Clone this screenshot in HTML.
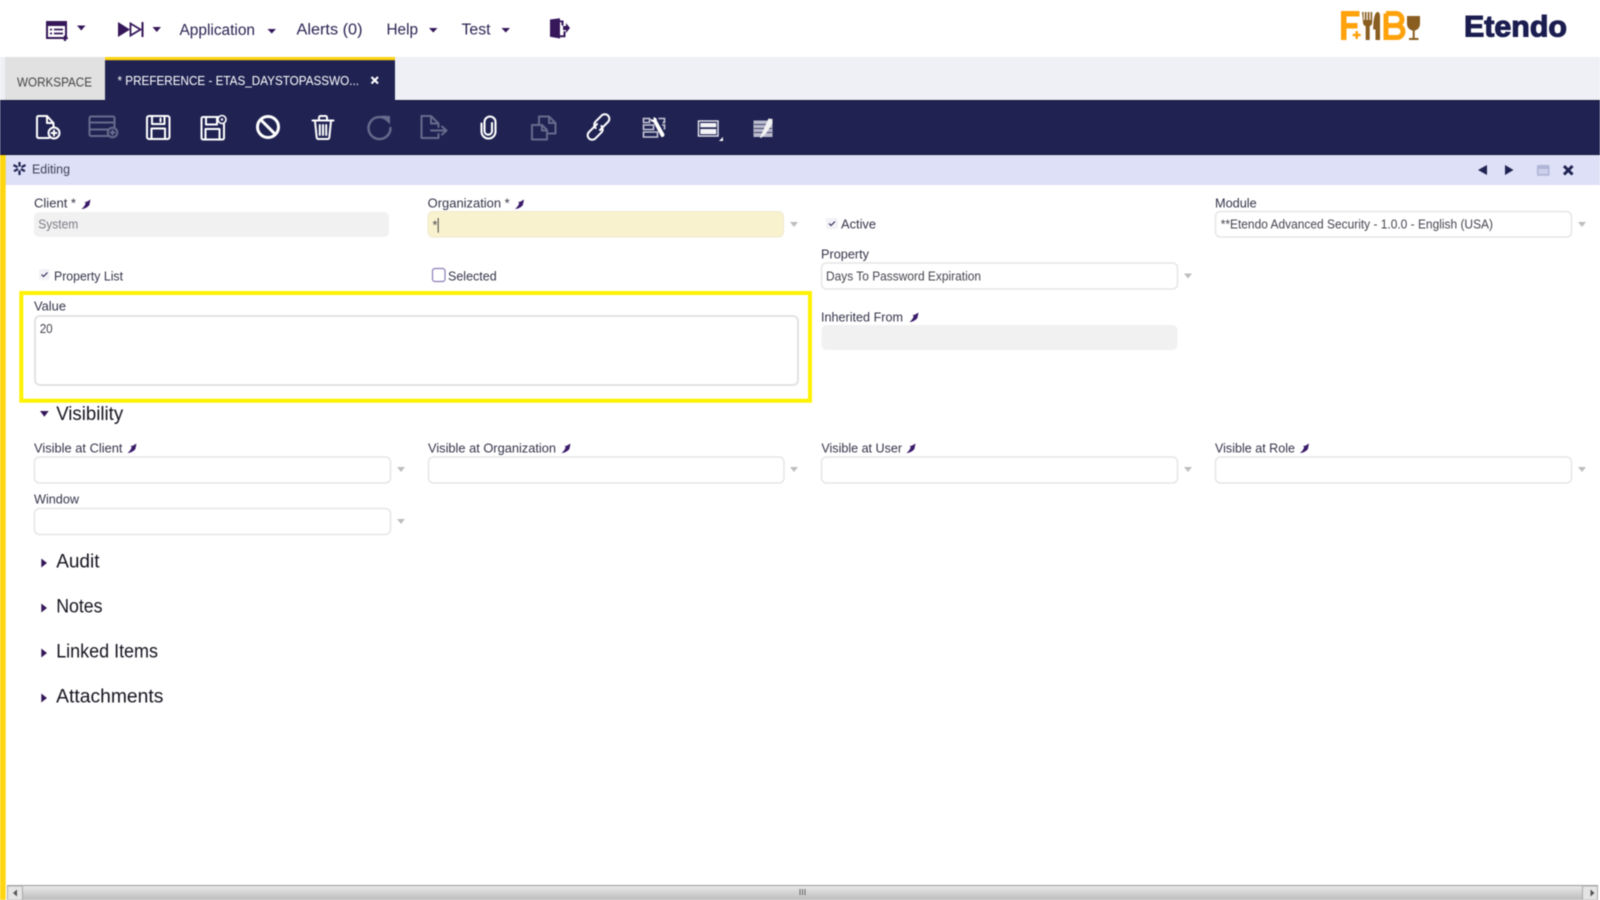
<!DOCTYPE html>
<html lang="en"><head><meta charset="utf-8"><title>Etendo - Preference</title>
<style>
html,body{margin:0;padding:0;width:1600px;height:900px;overflow:hidden;background:#fff}
svg{display:block;filter:blur(.42px)}
text{font-family:"Liberation Sans",sans-serif}
.m{font-size:15.5px;fill:#2a2352}
.l{font-size:12.5px;fill:#34344a}
.v{font-size:12.5px;fill:#45454f}
.h{font-size:19px;fill:#14141f}
.w{fill:none;stroke:#fff;stroke-width:2;stroke-linecap:round;stroke-linejoin:round}
.d{fill:none;stroke:#666a8c;stroke-width:2;stroke-linecap:round;stroke-linejoin:round}
.i{fill:#fff;stroke:#e6e6e6;stroke-width:1.5}
.g{fill:#f1f1f1}
.a{fill:#bdbdbd}
.c{fill:#35175a}
</style></head><body>
<svg width="1600" height="900" viewBox="0 0 1600 900" xmlns="http://www.w3.org/2000/svg">
<defs>
<path id="pin" d="M9 0L8 5C7.200 7.300 3.500 9.300 0 9.600C2.200 7.800 3.500 5.800 4.200 3.800L3 2.600L5.200 2.200Z" fill="#3a1a6a"/>
<linearGradient id="sb" x1="0" y1="0" x2="0" y2="1"><stop offset="0" stop-color="#ececec"/><stop offset="1" stop-color="#bcbcbc"/></linearGradient>
</defs>
<rect width="1600" height="900" fill="#fff"/>

<!-- top menu -->
<g>
<rect x="47" y="22" width="19" height="16" fill="none" stroke="#35175a" stroke-width="2"/>
<rect x="47" y="22" width="19" height="4" fill="#35175a"/>
<path d="M50 29.500h2M54 29.500h9M50 33.500h2M54 33.500h9" stroke="#35175a" stroke-width="1.800"/>
<path d="M65 35.500v5.500M62.300 38.200h5.500" stroke="#35175a" stroke-width="2.200"/>
<path class="c" d="M77 25.500h8.500l-4.250 5zM152.500 27h8.500l-4.250 5zM267.500 29h8.500l-4.250 4.500zM429 28h8.500l-4.250 4.500zM501.500 28h8.500l-4.250 4.500z"/>
<path class="c" d="M118 22l12 7.500-12 7.500z"/>
<path d="M130.500 23.500l10 6-10 6z" fill="none" stroke="#35175a" stroke-width="1.800"/>
<rect x="141.500" y="22" width="2" height="15" fill="#35175a"/>
<path class="c" d="M550 19.500l10-1.200v2.200h3.500v5h-2v-3.200h-1.500v13h3.500v-4h2v6h-5.500v1.200l-10-1.700z"/>
<path class="c" d="M563 26h3v-3l4 5-4 5v-3h-3z"/>
<text class="m" x="179.500" y="35" textLength="75.500" lengthAdjust="spacingAndGlyphs">Application</text>
<text class="m" x="296.500" y="34.500" textLength="66" lengthAdjust="spacingAndGlyphs">Alerts (0)</text>
<text class="m" x="386.500" y="34.500" textLength="31.500" lengthAdjust="spacingAndGlyphs">Help</text>
<text class="m" x="461.500" y="34.500" textLength="29" lengthAdjust="spacingAndGlyphs">Test</text>
</g>

<!-- logo -->
<g>
<path d="M1341 11h18.500v5.500h-13v6.500h11v5.500h-11v11.500h-5.500z" fill="#ffa20c"/>
<path d="M1356.700 31v8M1352.700 35h8" stroke="#ffa20c" stroke-width="2.400"/>
<path d="M1362 12h1.600v8h1.200v-8h1.700v8h1.200v-8h1.700v8h1.200v-8h1.600v10c0 2.500-1 3.500-2.500 4.200V40h-4V26.200c-1.700-.7-2.700-1.700-2.700-4.200z" fill="#8a5d20"/>
<path d="M1377.500 12c2 0 2.500 2 2.500 5v23h-4.500V29.500h-2.200C1373 22 1374.500 12 1377.500 12z" fill="#8a5d20"/>
<path d="M1386 13.500V37.500H1397a6 6 0 0 0 0-12H1386M1386 25.500H1396a6 6 0 0 0 0-12H1386" fill="none" stroke="#ffa20c" stroke-width="5"/>
<path d="M1407 16h13v7.500c0 4-2.500 6.500-5.300 7V38h3.800v2h-9.500v-2h3.700v-7.500c-3-.5-5.700-3-5.700-7z" fill="#8a5d20"/>
<text x="1464" y="36.500" font-size="30" font-weight="700" fill="#1b1d50" stroke="#1b1d50" stroke-width="1.100" textLength="103" lengthAdjust="spacingAndGlyphs">Etendo</text>
</g>

<!-- tab bar -->
<rect x="0" y="57" width="1600" height="43" fill="#eff0f5"/>
<rect x="5" y="57" width="100" height="43" fill="#e1e1e1"/>
<text x="17" y="86.500" font-size="12.800" fill="#444" textLength="75" lengthAdjust="spacingAndGlyphs">WORKSPACE</text>
<rect x="105" y="57" width="290" height="44" fill="#202352"/>
<rect x="105" y="57" width="290" height="3.200" fill="#ffd30e"/>
<text x="117.500" y="84.800" font-size="12.800" fill="#fff" textLength="241.500" lengthAdjust="spacingAndGlyphs">* PREFERENCE - ETAS_DAYSTOPASSWO...</text>
<path d="M371.500 77l6.500 6.500M378 77l-6.500 6.500" stroke="#fff" stroke-width="2.100"/>

<!-- toolbar -->
<rect x="0" y="100" width="1600" height="55" fill="#202352"/>
<rect x="0" y="100" width="105" height="1" fill="#11123a"/><rect x="395" y="100" width="1205" height="1" fill="#11123a"/>
<rect x="0" y="154" width="1600" height="1" fill="#11123a"/>

<!-- 1 new doc -->
<path class="w" d="M47 116H38.500a1.500 1.500 0 0 0-1.500 1.500v19a1.500 1.500 0 0 0 1.500 1.500H49M47 116l6.500 7v4M47 116v7h6.500"/>
<circle class="w" cx="54" cy="133" r="5.500"/><path class="w" d="M51.500 133h5M54 130.500v5"/>
<!-- 2 new row -->
<path class="d" d="M108 136H91a1.500 1.500 0 0 1-1.500-1.500V118a1.500 1.500 0 0 1 1.500-1.500h22a1.500 1.500 0 0 1 1.500 1.500v9M89.500 122.500h25M89.500 129.500h19"/>
<circle class="d" cx="112.500" cy="132.500" r="4.800"/><path class="d" d="M110.500 132.500h4M112.500 130.500v4"/>
<!-- 3 save -->
<rect class="w" x="147" y="116" width="22.500" height="23" rx="2"/>
<path class="w" d="M152 116v8h12.500v-8M160.500 118.500v3M151.500 139v-10.500h13.500V139"/>
<!-- 4 save as -->
<path class="w" d="M218 117H203a1.500 1.500 0 0 0-1.500 1.500v19.500a1.500 1.500 0 0 0 1.500 1.500h19.500a1.500 1.500 0 0 0 1.500-1.500V124"/>
<path class="w" d="M206 117v7.500h11V117M205.500 139.500V129h14v10.500"/>
<circle cx="222" cy="119.500" r="4" fill="none" stroke="#fff" stroke-width="1.600"/><circle cx="222" cy="119.500" r="1.200" fill="#fff"/>
<!-- 5 stop -->
<circle cx="268" cy="127" r="10.500" fill="none" stroke="#fff" stroke-width="3"/>
<path d="M260.500 119.500l15 15" stroke="#fff" stroke-width="3"/>
<!-- 6 trash -->
<path class="w" d="M312.500 120.500h21M319 120v-2.500a1.500 1.500 0 0 1 1.500-1.500h5a1.500 1.500 0 0 1 1.500 1.500v2.500M315 121l1.700 16.500a1.800 1.800 0 0 0 1.800 1.500h9a1.800 1.800 0 0 0 1.800-1.500L331 121M319.800 125v10M323 125v10M326.200 125v10"/>
<!-- 7 refresh -->
<path d="M387.500 120.500a11 11 0 1 0 3 7.500" fill="none" stroke="#666a8c" stroke-width="2.400" stroke-linecap="round"/>
<path d="M381.500 115.500l8.500.5v8.500z" fill="#666a8c"/>
<!-- 8 export -->
<path class="d" d="M431 116H421.500V138H438.500V134M431 116l7.500 7.500V127M431 116v7.500h7.500M431 130.500h15M442 126.500l4.500 4-4.500 4"/>
<!-- 9 clip -->
<path d="M481.500 123.500v8a7 7 0 0 0 14 0V122a5.500 5.500 0 0 0-11 0v9.500a3.800 3.800 0 0 0 7.500 0V123" fill="none" stroke="#fff" stroke-width="2.100" stroke-linecap="round"/>
<!-- 10 copy -->
<path class="d" d="M539 124v-7.500h10l6.500 6.500v10.500H547M549 116.500v6.500h6.500M532 125h10l5 5v9.500H532zM542 125v5.500h5"/>
<!-- 11 link -->
<path class="w" stroke-width="2.200" d="M600 130l8-8a4.500 4.500 0 0 0-6.400-6.400l-6 6a4.500 4.500 0 0 0 0 6.400"/>
<path class="w" stroke-width="2.200" d="M597 124l-8 8a4.500 4.500 0 0 0 6.400 6.400l6-6a4.500 4.500 0 0 0 0-6.400"/>
<!-- 12 fields + wrench -->
<path fill="none" stroke="#c7c8d8" stroke-width="1.600" d="M643.500 118.500h6v4h-6zM658.500 118.500h6v4h-2M643.500 125h10v4.500h-10zM662 125h2.500v4.500M643.500 132h14v5h-14z"/>
<path d="M653 117.500c2.500-.5 4 1 3.800 3l7.500 13.500c.7 1.500-.8 3.500-3 3l-8-15c-1.800 0-3-1.500-2.800-3.300l2 1.200 1.500-1z" fill="#fff"/>
<!-- 13 layout -->
<rect x="698.500" y="121" width="19.500" height="15" fill="#202352" stroke="#e9e9f2" stroke-width="1.400"/>
<rect x="700.300" y="123" width="16" height="4.300" fill="#f4f4f8"/>
<rect x="700.300" y="129" width="16" height="5.200" fill="#f4f4f8"/>
<path d="M723 137v4h-4z" fill="#fff"/>
<!-- 14 note pencil -->
<rect x="753.500" y="120.500" width="19" height="16.500" fill="#b9bacd"/>
<path d="M754 124.500h18M754 128.500h18M754 132.500h18" stroke="#202352" stroke-width="1" opacity=".75"/>
<path d="M772.500 119l-4-.5-8.500 19 1 .5 5-4.500 6.500-10z" fill="#f2f2f2"/>

<!-- status bar -->
<rect x="0" y="155" width="1600" height="30" fill="#dde0f6"/>
<path d="M19.500 162v13M13.500 165l12 6.500M25.500 165l-12 6.500" stroke="#202352" stroke-width="2.200" stroke-dasharray="4.600 3.800"/>
<text x="32" y="173.300" font-size="12.500" fill="#3d3f58" textLength="38" lengthAdjust="spacingAndGlyphs">Editing</text>
<path d="M1487 165v10l-9-5zM1505 165v10l8.500-5z" fill="#1f2252"/>
<rect x="1537" y="165" width="12.500" height="10.700" rx="1" fill="#b0b4d6"/>
<rect x="1538.500" y="169" width="9.500" height="5" fill="#ccd0ea"/>
<path d="M1564 166l8.500 8.500M1572.500 166l-8.500 8.500" stroke="#1f2252" stroke-width="3"/>

<!-- left accent -->
<rect x="0" y="155" width="5.700" height="745" fill="#ffd60f"/>

<!-- Row 1 -->
<text class="l" x="34" y="207.500" textLength="42" lengthAdjust="spacingAndGlyphs">Client *</text>
<use href="#pin" x="81.500" y="199.500"/>
<rect class="g" x="34" y="212" width="355" height="25" rx="5"/>
<text x="38.300" y="228.500" font-size="12.500" fill="#7c7c84" textLength="40" lengthAdjust="spacingAndGlyphs">System</text>

<text class="l" x="427.700" y="207.300" textLength="82" lengthAdjust="spacingAndGlyphs">Organization *</text>
<use href="#pin" x="515" y="199.500"/>
<rect x="428" y="211.500" width="355.500" height="25.500" rx="5" fill="#f9f2cf" stroke="#eee9cf"/>
<text class="v" x="432.500" y="229.500">*</text>
<rect x="437.700" y="218" width="1" height="14.700" fill="#444"/>
<path class="a" d="M790 222h8l-4 5z"/>

<rect x="826" y="218" width="12" height="11" rx="2" fill="#f2f2f7"/>
<path d="M829 223.500l2 2 4-4" fill="none" stroke="#2a2352" stroke-width="1.100"/>
<text class="l" x="841" y="228.500" textLength="35" lengthAdjust="spacingAndGlyphs">Active</text>

<text class="l" x="1215" y="207.300" textLength="41.700" lengthAdjust="spacingAndGlyphs">Module</text>
<rect class="i" x="1215.500" y="211.500" width="356" height="25.500" rx="5"/>
<text class="v" x="1220.700" y="228.500" textLength="272.300" lengthAdjust="spacingAndGlyphs">**Etendo Advanced Security - 1.0.0 - English (USA)</text>
<path class="a" d="M1578 222h8l-4 5z"/>

<!-- Row 2 -->
<rect x="39" y="269" width="10.500" height="11" rx="2" fill="#f2f2f7"/>
<path d="M41.500 274.500l2 2 4-4" fill="none" stroke="#2a2352" stroke-width="1.100"/>
<text class="l" x="54" y="280.500" textLength="69" lengthAdjust="spacingAndGlyphs">Property List</text>
<rect x="432.500" y="268.500" width="12.500" height="13" rx="2.500" fill="#fff" stroke="#8b7bb8" stroke-width="1.200"/>
<text class="l" x="448" y="280.500" textLength="48.700" lengthAdjust="spacingAndGlyphs">Selected</text>

<text class="l" x="821" y="258.500" textLength="48" lengthAdjust="spacingAndGlyphs">Property</text>
<rect class="i" x="821.500" y="263" width="356" height="26" rx="5"/>
<text class="v" x="826" y="280.500" textLength="155" lengthAdjust="spacingAndGlyphs">Days To Password Expiration</text>
<path class="a" d="M1184 273.500h8l-4 5z"/>

<!-- Highlight + Value -->
<rect x="21.300" y="293" width="788.700" height="107.700" fill="none" stroke="#fff200" stroke-width="4"/>
<text class="l" x="34" y="310.500" textLength="32" lengthAdjust="spacingAndGlyphs">Value</text>
<rect x="35" y="316" width="763" height="69" rx="5" fill="#fff" stroke="#e3e3e3" stroke-width="2"/>
<text class="v" x="39.700" y="333" textLength="13" lengthAdjust="spacingAndGlyphs">20</text>

<text class="l" x="821" y="321.300" textLength="82" lengthAdjust="spacingAndGlyphs">Inherited From</text>
<use href="#pin" x="909.500" y="312.500"/>
<rect class="g" x="821.500" y="325" width="356" height="25" rx="5"/>

<!-- Visibility -->
<path class="c" d="M40 411h8.700l-4.350 5.700z"/>
<text class="h" x="56.200" y="420" textLength="67" lengthAdjust="spacingAndGlyphs">Visibility</text>

<text class="l" x="34" y="452.300" textLength="88.500" lengthAdjust="spacingAndGlyphs">Visible at Client</text>
<use href="#pin" x="127.500" y="443.500"/>
<rect class="i" x="34.500" y="457" width="356" height="26" rx="5"/>
<path class="a" d="M397 467h8l-4 5z"/>

<text class="l" x="428" y="452.300" textLength="128" lengthAdjust="spacingAndGlyphs">Visible at Organization</text>
<use href="#pin" x="561.500" y="443.500"/>
<rect class="i" x="428.500" y="457" width="355.500" height="26" rx="5"/>
<path class="a" d="M790 467h8l-4 5z"/>

<text class="l" x="821.400" y="452.300" textLength="80.600" lengthAdjust="spacingAndGlyphs">Visible at User</text>
<use href="#pin" x="906.500" y="443.500"/>
<rect class="i" x="821.500" y="457" width="356" height="26" rx="5"/>
<path class="a" d="M1184 467h8l-4 5z"/>

<text class="l" x="1215" y="452.300" textLength="80" lengthAdjust="spacingAndGlyphs">Visible at Role</text>
<use href="#pin" x="1300" y="443.500"/>
<rect class="i" x="1215.500" y="457" width="356" height="26" rx="5"/>
<path class="a" d="M1578 467h8l-4 5z"/>

<text class="l" x="34" y="503.500" textLength="45" lengthAdjust="spacingAndGlyphs">Window</text>
<rect class="i" x="34.500" y="508.500" width="356" height="26" rx="5"/>
<path class="a" d="M397 519h8l-4 5z"/>

<!-- Sections -->
<path class="c" d="M41.300 558.500l5.700 4.500-5.700 4.500zM41.300 603.500l5.700 4.500-5.700 4.500zM41.300 648.500l5.700 4.500-5.700 4.500zM41.300 693.500l5.700 4.500-5.700 4.500z"/>
<text class="h" x="56.200" y="567.300" textLength="43.300" lengthAdjust="spacingAndGlyphs">Audit</text>
<text class="h" x="56.200" y="612.300" textLength="46.300" lengthAdjust="spacingAndGlyphs">Notes</text>
<text class="h" x="56.200" y="657.300" textLength="101.800" lengthAdjust="spacingAndGlyphs">Linked Items</text>
<text class="h" x="56.200" y="702.300" textLength="107.200" lengthAdjust="spacingAndGlyphs">Attachments</text>

<!-- Scrollbar -->
<rect x="7" y="885" width="1591" height="15" fill="url(#sb)"/>
<rect x="7" y="885" width="1591" height="1" fill="#9a9a9a"/>
<rect x="7.500" y="886" width="15" height="14" fill="#e4e4e4" stroke="#aaa"/>
<rect x="1582.500" y="886" width="15" height="14" fill="#e4e4e4" stroke="#aaa"/>
<path d="M17 889.500v7l-4-3.500zM1590.500 889.500v7l4-3.500z" fill="#555"/>
<path d="M800 889v6M802.500 889v6M805 889v6" stroke="#666" stroke-width="1"/>
</svg>
</body></html>
